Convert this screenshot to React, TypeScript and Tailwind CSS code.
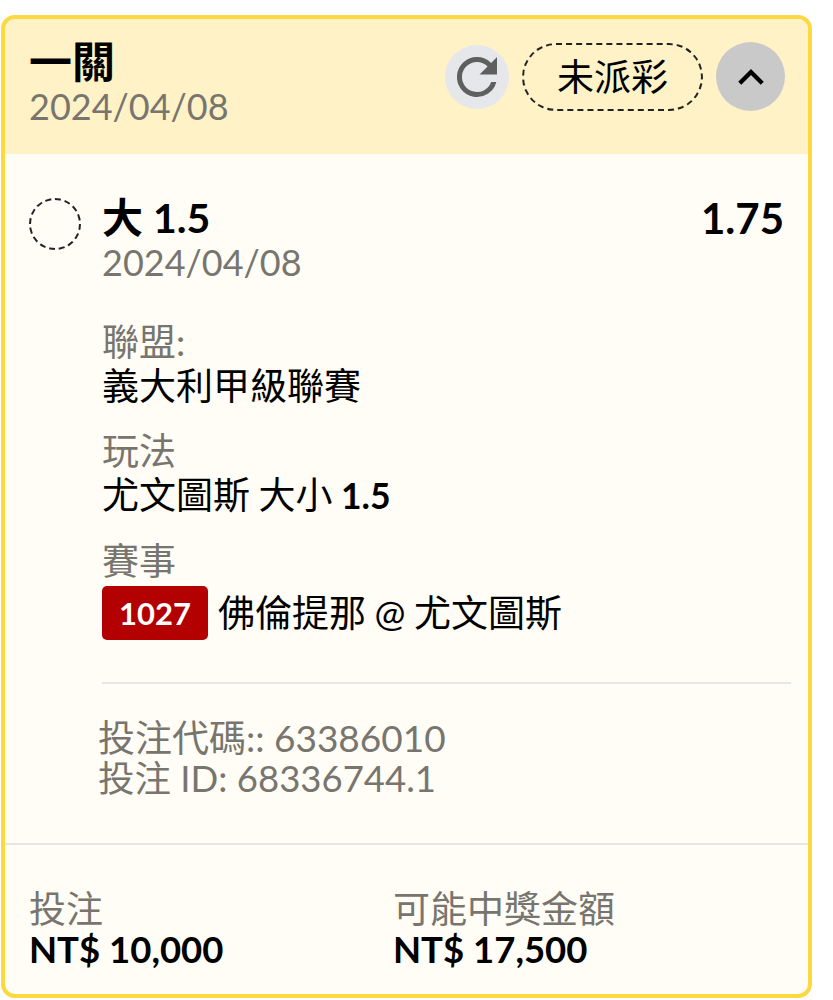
import React from 'react';

const font = "font-['Lato','Noto_Sans_CJK_TC',sans-serif]";

const InfoBlock = ({ label, children }: { label: string; children: React.ReactNode }) => (
  <div className="mb-[21px]">
    <div className="text-[37px] leading-[44px] text-[#77756e]">{label}</div>
    {children}
  </div>
);

export default function App() {
  return (
    <div className={`${font} h-[1000px] w-[833px] bg-white pl-[1px] pt-[15px] text-black`}>
      <div className="flex h-[983px] w-[811px] flex-col overflow-hidden rounded-[14px] border-4 border-[#fcd93f] bg-[#fffdf6]">
        {/* header */}
        <div className="flex h-[135px] items-start justify-between bg-[#fff2c7] pl-[24px] pr-[23px] pt-[19px]">
          <div>
            <div className="text-[43px] font-bold leading-[48px]">一關</div>
            <div className="text-[36px] leading-[40px] text-[#77756e]">2024/04/08</div>
          </div>
          <div className="mt-[4px] flex items-center">
            <div className="flex h-[64px] w-[64px] items-center justify-center rounded-full bg-[#e5e7eb]">
              <svg width="60" height="60" viewBox="0 0 24 24" fill="#5f5f5f">
                <path d="M17.65 6.35A7.96 7.96 0 0 0 12 4a8 8 0 1 0 7.73 10h-2.08A6 6 0 1 1 12 6c1.66 0 3.14.69 4.22 1.78L13 11h7V4l-2.35 2.35z" />
              </svg>
            </div>
            <div className="ml-[13px] flex h-[68px] w-[181px] items-center justify-center rounded-full border-2 border-dashed border-[#222] text-[37px] leading-none">
              未派彩
            </div>
            <div className="ml-[13px] flex h-[69px] w-[69px] items-center justify-center rounded-full bg-[#c9c9c9]">
              <svg width="30" height="30" viewBox="0 0 24 24" fill="none" stroke="#000" strokeWidth="3.4">
                <path d="M3 17 12 8l9 9" />
              </svg>
            </div>
          </div>
        </div>

        {/* selection */}
        <div className="flex-1 pl-[24px] pr-[17px] pt-[42px]">
          <div className="flex">
            <div className="mt-[2px] h-[52px] w-[52px] shrink-0 rounded-full border-2 border-dashed border-[#222]" />
            <div className="ml-[21px] flex-1">
              <div className="flex items-start justify-between pr-[7px]">
                <div className="text-[41px] font-bold leading-[44px]">大 1.5</div>
                <div className="text-[42px] font-bold leading-[44px]">1.75</div>
              </div>
              <div className="mt-[2px] text-[36px] leading-[40px] text-[#77756e]">2024/04/08</div>
              <div className="mt-[38px]">
                <InfoBlock label="聯盟:">
                  <div className="text-[37px] leading-[44px]">義大利甲級聯賽</div>
                </InfoBlock>
                <InfoBlock label="玩法">
                  <div className="text-[37px] leading-[44px] [word-spacing:-1px]">
                    尤文圖斯 大小 <span className="text-[35.5px] font-bold">1.5</span>
                  </div>
                </InfoBlock>
                <InfoBlock label="賽事">
                  <div className="mt-[3px] flex items-center">
                    <span className="flex h-[54px] w-[106px] items-center justify-center rounded-[5px] bg-[#b30000] text-[31px] font-bold text-white">1027</span>
                    <span className="ml-[10px] text-[37px] leading-[44px] [word-spacing:-1px]">佛倫提那 @ 尤文圖斯</span>
                  </div>
                </InfoBlock>
              </div>
              <div className="mt-[42px] border-t-2 border-[#e8e6e0]" />
              <div className="-ml-[4px] mt-[34px] leading-[40px] text-[#77756e]">
                <div className="text-[37px]">投注代碼:: 63386010</div>
                <div className="text-[36.5px]">投注 ID: 68336744.1</div>
              </div>
            </div>
          </div>
        </div>

        {/* totals */}
        <div className="flex h-[151px] border-t-2 border-[#e8e6e0] pl-[24px] pt-[44px]">
          <div className="w-[364px]">
            <div className="text-[37px] leading-[40px] text-[#77756e]">投注</div>
            <div className="text-[36.5px] font-bold leading-[40px]">NT$ 10,000</div>
          </div>
          <div>
            <div className="text-[37px] leading-[40px] text-[#77756e]">可能中獎金額</div>
            <div className="text-[36.5px] font-bold leading-[40px]">NT$ 17,500</div>
          </div>
        </div>
      </div>
    </div>
  );
}
